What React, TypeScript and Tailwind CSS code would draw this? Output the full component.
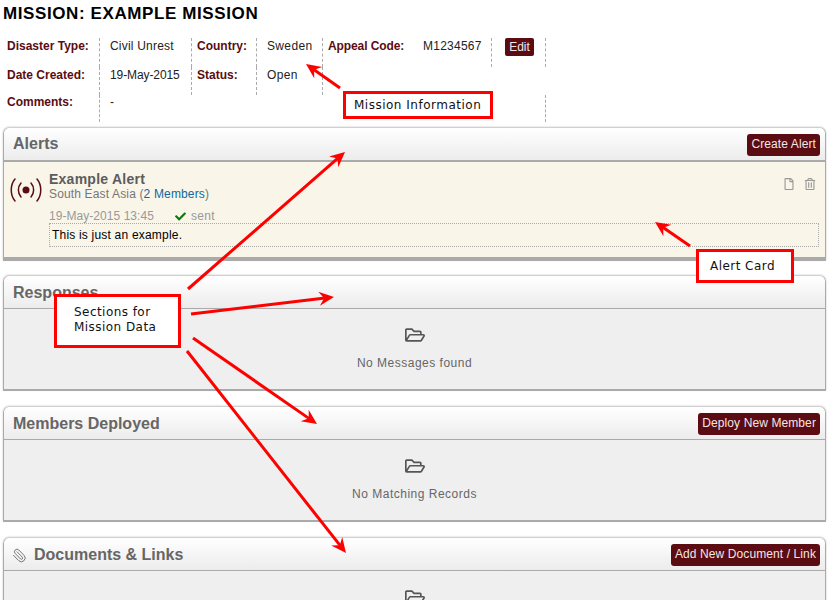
import React from "react";
import { FaRegFolderOpen, FaCheck, FaRegFile, FaRegTrashAlt } from "react-icons/fa";
import { Paperclip } from "lucide-react";

function Arrow({ x1, y1, x2, y2 }: { x1: number; y1: number; x2: number; y2: number }) {
  const a = Math.atan2(y2 - y1, x2 - x1);
  const p = (d: number, s: number) =>
    `${x2 - d * Math.cos(a) - s * Math.sin(a)},${y2 - d * Math.sin(a) + s * Math.cos(a)}`;
  return (
    <g>
      <line x1={x1} y1={y1} x2={x2 - 9 * Math.cos(a)} y2={y2 - 9 * Math.sin(a)} stroke="#ff0000" strokeWidth="3" />
      <polygon points={`${x2},${y2} ${p(15, 7)} ${p(10, 0)} ${p(15, -7)}`} fill="#ff0000" />
    </g>
  );
}

function Btn({ children, alert }: { children: React.ReactNode; alert?: boolean }) {
  return (
    <div className={`h-[22px] leading-[21px] px-[4px] rounded-[3px] bg-[#5a0c12] text-[#f2e6e6] text-[12px] tracking-[0.1px] whitespace-nowrap ${alert ? "mt-[2px]" : ""}`}>
      {children}
    </div>
  );
}

function Section({
  title,
  icon,
  action,
  children,
  alert,
}: {
  title: string;
  icon?: React.ReactNode;
  action?: string;
  children: React.ReactNode;
  alert?: boolean;
}) {
  return (
    <section className={`border-x border-[#aaaaaa] rounded-t-[6px] shadow-[0_-1px_2px_rgba(0,0,0,0.25)] ${alert ? "border-b-[4px] -mb-[1px]" : "border-b-[2px]"}`}>
      <header className={`flex items-center justify-between pl-[9px] pr-[5px] rounded-t-[6px] bg-gradient-to-b from-white to-[#ececec] border-[#aaaaaa] ${alert ? "border-b-2 h-[34px]" : "border-b h-[33px] pt-[2px]"}`}>
        <div className="flex items-center gap-[7px] text-[#666666] text-[16px] font-bold">
          {icon}
          {title}
        </div>
        {action && <Btn alert={alert}>{action}</Btn>}
      </header>
      {children}
    </section>
  );
}

function Empty({ text }: { text: string }) {
  return (
    <div className="bg-[#efefef] h-[80px] flex flex-col items-center text-[#555555]">
      <FaRegFolderOpen className="mt-[16px] text-[20px] text-[#555555]" />
      <div className="mt-[9px] text-[12px] tracking-[0.5px] text-[#666666]">{text}</div>
    </div>
  );
}

const lab = "pl-[4px] pt-[1px] font-bold text-[12px] text-[#5a0c12]";
const val = "pl-[10px] pt-[1px] text-[12px] text-[#222222]";
const dash = "border-r border-dashed border-[#aaaaaa]";

export default function App() {
  return (
    <div
      className="relative w-[830px] h-[600px] overflow-hidden bg-white pl-[3px] pr-[4px] pt-[4px]"
      style={{ fontFamily: '"Liberation Sans", Arial, sans-serif' }}
    >
      <h1 className="h-[20px] leading-[20px] text-[17px] font-bold text-black tracking-[0.6px]">MISSION: EXAMPLE MISSION</h1>

      <div className="mt-[14px] grid grid-cols-[97px_92px_65px_66px_90px_79px_54px] grid-rows-[29px_28px_27px] w-[543px] leading-[14px]">
        <div className={`${lab} ${dash}`}>Disaster Type:</div>
        <div className={`${val} ${dash} tracking-[0.2px]`}>Civil Unrest</div>
        <div className={`${lab} ${dash} pl-[5px]`}>Country:</div>
        <div className={`${val} ${dash} tracking-[0.35px]`}>Sweden</div>
        <div className={`${lab} pl-[5px] tracking-[-0.1px]`}>Appeal Code:</div>
        <div className={`${val} ${dash} tracking-[0.25px]`}>M1234567</div>
        <div className={`pl-[13px] ${dash}`}>
          <div className="w-[29px] h-[18px] leading-[18px] text-center rounded-[2px] bg-[#5a0c12] text-[#f2e6e6] text-[12px]">Edit</div>
        </div>

        <div className={`${lab} ${dash}`}>Date Created:</div>
        <div className={`${val} ${dash} tracking-[-0.1px]`}>19-May-2015</div>
        <div className={`${lab} ${dash} pl-[5px]`}>Status:</div>
        <div className={`${val} ${dash} tracking-[0.35px]`}>Open</div>
        <div className="col-span-3" />

        <div className={`${lab} ${dash} pt-[0px] leading-[12px]`}>Comments:</div>
        <div className={`${val} col-span-6 ${dash} pt-[0px] leading-[12px]`}>-</div>
      </div>

      <div className="mt-[6px] flex flex-col gap-[16px]">
        <Section title="Alerts" action="Create Alert" alert>
          <div className="bg-[#f9f5e9] h-[95px] flex pl-[6px] pr-[6px] pt-[10px]">
            <svg width="32" height="24" viewBox="0 0 32 24" className="mt-[6px] shrink-0" fill="none" stroke="#5a0c12" strokeWidth="1.5" strokeLinecap="round">
              <circle cx="16" cy="12" r="3.5" fill="#5a0c12" stroke="none" />
              <path d="M11 5C7.5 9 7.5 15 11 19" />
              <path d="M21 5C24.5 9 24.5 15 21 19" />
              <path d="M5 1C0 7 0 17 5 23" />
              <path d="M27 1C32 7 32 17 27 23" />
            </svg>
            <div className="flex-1 ml-[7px] min-w-0">
              <div className="flex justify-between">
                <div>
                  <div className="text-[14px] leading-[15px] font-bold text-[#5c5c5c] tracking-[0.25px]">Example Alert</div>
                  <div className="text-[12px] leading-[14px] text-[#777777] tracking-[0.15px]">
                    South East Asia (<span className="text-[#0b6aa2]">2 Members</span>)
                  </div>
                </div>
                <div className="flex gap-[9px] pr-[3px] pt-[6px] text-[#999999] text-[12px]">
                  <FaRegFile />
                  <FaRegTrashAlt />
                </div>
              </div>
              <div className="mt-[9px] flex items-center text-[12px] leading-[13px] text-[#999999] tracking-[0.05px]">
                <span>19-May-2015 13:45</span>
                <FaCheck className="ml-[21px] mr-[5px] text-[11px] text-[#0c7a0c]" />
                <span className="tracking-[0.35px]">sent</span>
              </div>
              <div className="h-[24px] pl-[2px] leading-[23px] border border-dotted border-[#aaaaaa] text-[12px] text-black tracking-[0.2px]">
                This is just an example.
              </div>
            </div>
          </div>
        </Section>

        <Section title="Responses">
          <Empty text="No Messages found" />
        </Section>

        <Section title="Members Deployed" action="Deploy New Member">
          <Empty text="No Matching Records" />
        </Section>

        <Section title="Documents & Links" icon={<Paperclip size={15} strokeWidth={1.6} className="-ml-[1px] text-[#777777] -scale-x-100" />} action="Add New Document / Link">
          <Empty text="" />
        </Section>
      </div>

      <svg className="absolute inset-0" width="830" height="600" viewBox="0 0 830 600">
        <Arrow x1={340} y1={88} x2={306} y2={64} />
        <Arrow x1={690} y1={246} x2={655} y2={222} />
        <Arrow x1={188} y1={289} x2={345} y2={152} />
        <Arrow x1={191} y1={314} x2={334} y2={297} />
        <Arrow x1={193} y1={338} x2={317} y2={424} />
        <Arrow x1={187} y1={351} x2={346} y2={553} />
      </svg>

      <div
        className="absolute left-[343px] top-[91px] w-[150px] h-[28px] border-[3px] border-[#ff0000] bg-white text-[12px] leading-[22px] pl-[8px] text-[#111111] tracking-[0.5px]"
        style={{ fontFamily: '"DejaVu Sans", sans-serif' }}
      >
        Mission Information
      </div>
      <div
        className="absolute left-[696px] top-[249px] w-[98px] h-[34px] border-[3px] border-[#ff0000] bg-white text-[12px] leading-[29px] pl-[11px] text-[#111111] tracking-[0.45px]"
        style={{ fontFamily: '"DejaVu Sans", sans-serif' }}
      >
        Alert Card
      </div>
      <div
        className="absolute left-[54px] top-[294px] w-[127px] h-[54px] border-[3px] border-[#ff0000] bg-white text-[12px] leading-[15px] pl-[17px] pt-[8px] text-[#111111] tracking-[0.45px]"
        style={{ fontFamily: '"DejaVu Sans", sans-serif' }}
      >
        Sections for
        <br />
        Mission Data
      </div>
    </div>
  );
}
